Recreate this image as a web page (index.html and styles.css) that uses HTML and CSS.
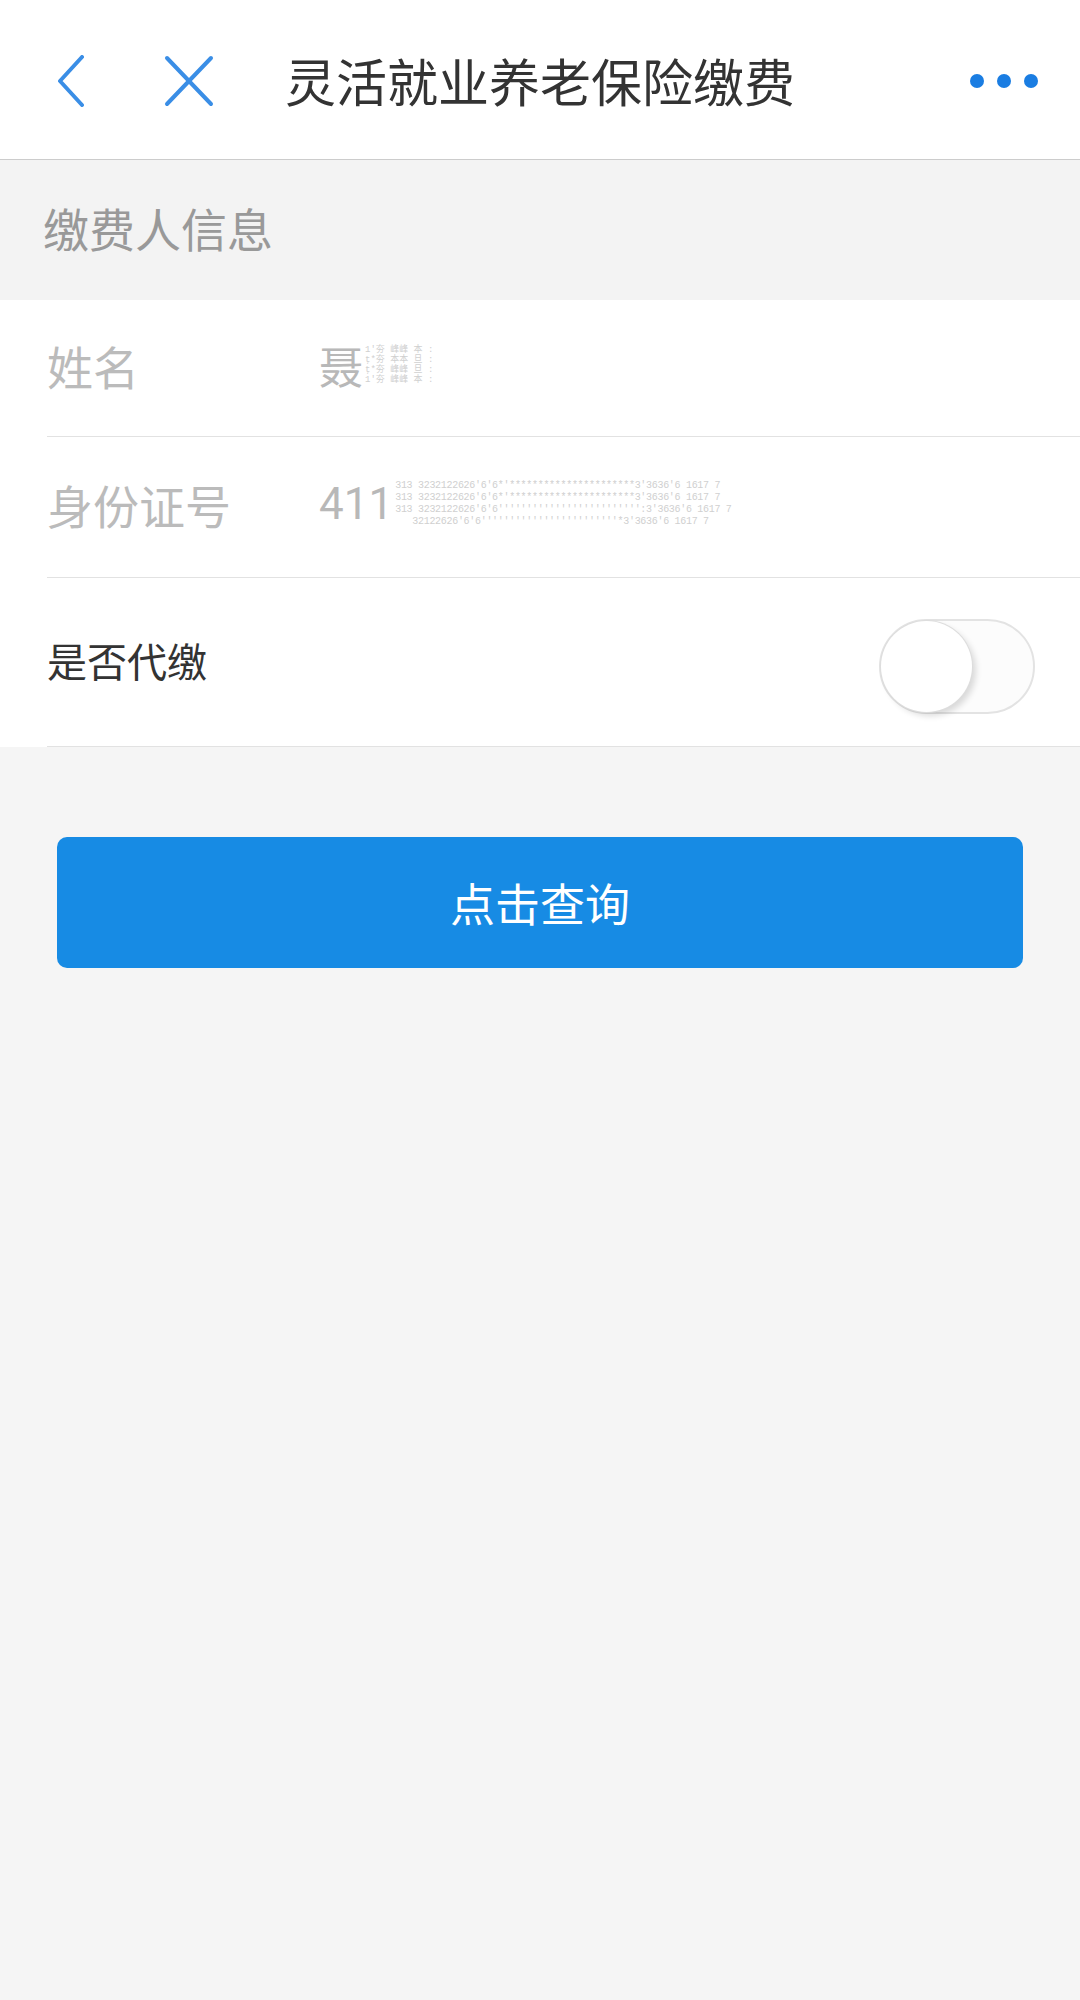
FILE: index.html
```html
<!DOCTYPE html>
<html>
<head>
    <meta name="viewport" content="width=device-width, initial-scale=1.0">
    <title>灵活就业养老保险缴费</title>
    <link rel="stylesheet" href="styles.css">
</head>
<body>
    <!-- top bar -->
    <div class="topbar">
        <svg class="ico-back" width="28" height="52" viewBox="0 0 28 52">
            <polyline points="25,2 3,26 25,50" fill="none" stroke="#3a8ee6" stroke-width="4" stroke-linecap="round" stroke-linejoin="round"/>
        </svg>
        <svg class="ico-close" width="50" height="52" viewBox="0 0 50 52">
            <line x1="3" y1="3" x2="47" y2="49" stroke="#3a8ee6" stroke-width="4" stroke-linecap="round"/>
            <line x1="47" y1="3" x2="3" y2="49" stroke="#3a8ee6" stroke-width="4" stroke-linecap="round"/>
        </svg>
        <span class="title">灵活就业养老保险缴费</span>
        <span class="more"><i></i><i></i><i></i></span>
    </div>

    <div class="sect">缴费人信息</div>

    <div class="form">
        <div class="row r1">
            <span class="label">姓名</span>
            <span class="value">聂</span>
            <span class="smear s-name">1'夯 峰峰 本 :<br>ţ*夯 本本 旦 :<br>ţ*夯 峰峰 旦 :<br>1'夯 峰峰 本 :</span>
        </div>
        <div class="row r2">
            <span class="label">身份证号</span>
            <span class="value num">411</span>
            <span class="smear s-id">313 3232122626'6'6*'**********************3'3636'6 1617 7<br>313 3232122626'6'6*'**********************3'3636'6 1617 7<br>313 3232122626'6'6''''''''''''''''''''''''':3'3636'6 1617 7<br>&nbsp;&nbsp;&nbsp;32122626'6'6''''''''''''''''''''''''*3'3636'6 1617 7</span>
        </div>
        <div class="row r3">
            <span class="label dark">是否代缴</span>
            <span class="switch"><span class="knob"></span></span>
        </div>
    </div>

    <div class="actions">
        <a class="btn">点击查询</a>
    </div>
</body>
</html>
```

FILE: styles.css
```css
html, body {
    margin: 0;
    padding: 0;
}
body {
    background-color: #f5f5f5;
    font-family: "Noto Sans CJK SC", "Noto Sans", sans-serif;
    min-height: 2000px;
}

.topbar {
    height: 159px;
    background-color: #ffffff;
    border-bottom: 1px solid #cccccc;
    display: flex;
    align-items: center;
    padding: 0 42px 0 56px;
}
.ico-back {
    margin-left: 1px;
    margin-top: 2px;
}
.ico-close {
    margin-left: 79px;
    margin-top: 2px;
}
.title {
    margin-left: 71px;
    font-size: 51px;
    color: #333333;
    line-height: 1;
    margin-top: 2px;
}
.more {
    margin-left: auto;
    display: flex;
    gap: 13px;
    margin-top: 2px;
}
.more i {
    display: block;
    width: 14px;
    height: 14px;
    border-radius: 50%;
    background-color: #1a7de2;
}

.sect {
    height: 140px;
    background-color: #f3f3f3;
    color: #999999;
    font-size: 46px;
    padding-left: 43px;
    padding-bottom: 6px;
    display: flex;
    align-items: center;
    box-sizing: border-box;
}

.form {
    background-color: #ffffff;
    padding-left: 47px;
}
.row {
    display: flex;
    align-items: center;
    border-bottom: 1px solid #e2e2e2;
    padding-right: 45px;
}
.r1 { height: 136px; }
.r2 { height: 140px; }
.r3 { height: 168px; }

.label {
    width: 272px;
    flex-shrink: 0;
    font-size: 46px;
    color: #bbbbbb;
    line-height: 1;
    margin-top: -6px;
}
.label.dark {
    font-size: 40px;
    color: #333333;
    margin-top: -4px;
}
.value {
    font-size: 44px;
    color: #b8b8b8;
    line-height: 1;
    margin-top: -6px;
}
.value.num {
    font-family: "Roboto", "Noto Sans", sans-serif;
    font-size: 44px;
}
.smear {
    font-family: "Liberation Mono", "Noto Sans CJK SC", monospace;
    color: #d0d0d0;
    margin-top: -6px;
    white-space: nowrap;
}
.s-name {
    font-size: 9px;
    line-height: 10px;
    margin-left: 2px;
}
.s-id {
    font-size: 10px;
    line-height: 12px;
    letter-spacing: -0.3px;
    margin-left: 2px;
}

.switch {
    margin-left: auto;
    width: 152px;
    height: 91px;
    border: 2px solid #e3e3e3;
    border-radius: 48px;
    background-color: #fcfcfc;
    display: flex;
    align-items: center;
    margin-top: 8px;
}
.knob {
    width: 91px;
    height: 91px;
    border-radius: 50%;
    background-color: #ffffff;
    box-shadow: 0 0 0 1px #dddddd, 4px 4px 6px rgba(0, 0, 0, 0.14);
}

.actions {
    padding: 90px 57px 0 57px;
}
.btn {
    display: flex;
    align-items: center;
    justify-content: center;
    height: 131px;
    border-radius: 10px;
    background-color: #178be4;
    color: #ffffff;
    font-size: 45px;
    cursor: pointer;
}
```
